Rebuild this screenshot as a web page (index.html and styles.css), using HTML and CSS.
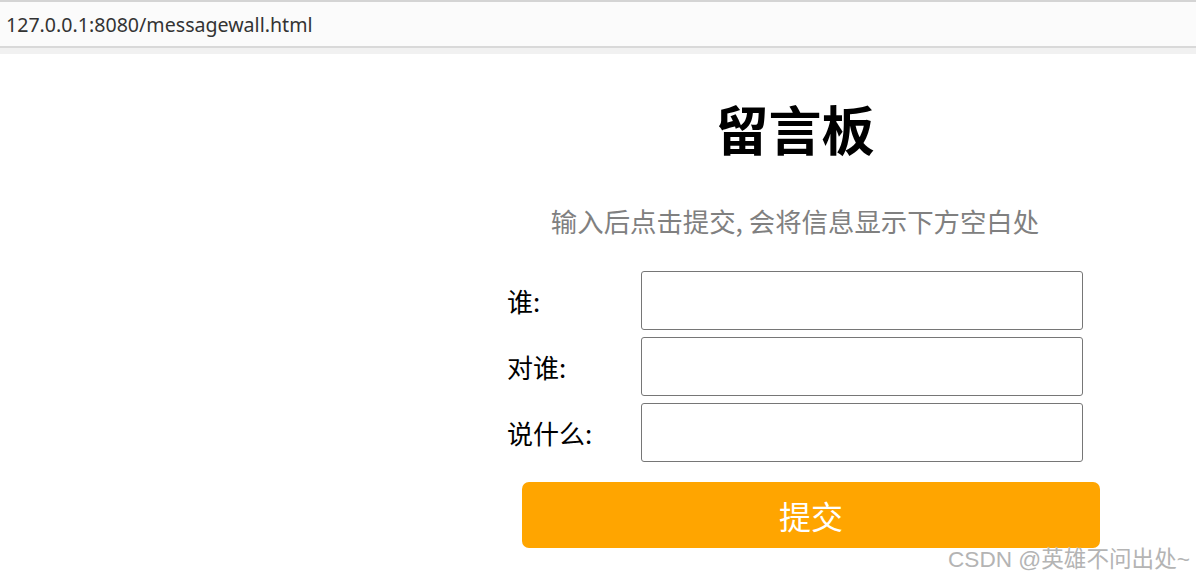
FILE: index.html
```html
<!DOCTYPE html>
<html lang="zh">
<head>
<meta charset="utf-8">
<title>messagewall</title>
<link rel="stylesheet" href="styles.css">
</head>
<body>
<div class="addressbar">
  <div class="url">127.0.0.1:8080/messagewall.html</div>
</div>
<div class="page">
  <div class="wall">
    <h1 class="title">留言板</h1>
    <p class="hint">输入后点击提交, 会将信息显示下方空白处</p>
    <div class="row"><span class="label">谁:</span><input class="field" type="text"></div>
    <div class="row"><span class="label">对谁:</span><input class="field" type="text"></div>
    <div class="row"><span class="label">说什么:</span><input class="field" type="text"></div>
    <button class="submit" type="button">提交</button>
  </div>
</div>
<div class="watermark">CSDN @英雄不问出处~</div>
</body>
</html>
```

FILE: styles.css
```css
html, body {
  margin: 0;
  padding: 0;
  background: #ffffff;
  font-family: "Noto Sans", "Noto Sans CJK SC", sans-serif;
}
body {
  position: relative;
  height: 581px;
  overflow: hidden;
}
.addressbar {
  border-top: 2px solid #d4d4d4;
  border-bottom: 2px solid #d9d9d9;
  background: #fbfbfb;
  height: 44px;
  display: flex;
  align-items: center;
  padding-left: 6px;
  box-shadow: 0 6px 0 #f1f1f1;
}
.url {
  font-family: "Noto Sans", "Open Sans", sans-serif;
  font-size: 19.6px;
  color: #333333;
}
.page {
  padding-top: 48px;
}
.wall {
  margin-left: 495px;
  width: 600px;
  display: flex;
  flex-direction: column;
  font-family: "Noto Sans CJK SC", "Noto Sans", sans-serif;
}
.title {
  margin: 0;
  text-align: center;
  font-size: 53px;
  line-height: 64px;
  font-weight: 700;
  color: #000;
}
.hint {
  margin: 44px 0 0 0;
  text-align: center;
  font-size: 26.4px;
  line-height: 34px;
  color: #808080;
}
.row {
  display: flex;
  align-items: center;
  margin-top: 7px;
}
.hint + .row {
  margin-top: 33px;
}
.label {
  width: 146px;
  padding-left: 12px;
  box-sizing: border-box;
  font-size: 26px;
  color: #000;
}
.field {
  width: 442px;
  height: 59px;
  box-sizing: border-box;
  border: 1px solid #767676;
  border-radius: 3px;
  margin: 0;
  padding: 0 8px;
  font-size: 20px;
  background: #fff;
}
.submit {
  margin: 20px 0 0 27px;
  width: 578px;
  height: 66px;
  border: none;
  border-radius: 7px;
  background: #ffa500;
  color: #ffffff;
  font-family: "Noto Sans CJK SC", sans-serif;
  font-size: 32px;
  padding: 0;
}
.watermark {
  position: absolute;
  right: 6px;
  bottom: 7px;
  font-family: "Liberation Sans", "Noto Sans CJK SC", sans-serif;
  font-size: 22.6px;
  color: #b4b4b4;
  text-shadow: 0 0 1px #ffffff;
}
```
